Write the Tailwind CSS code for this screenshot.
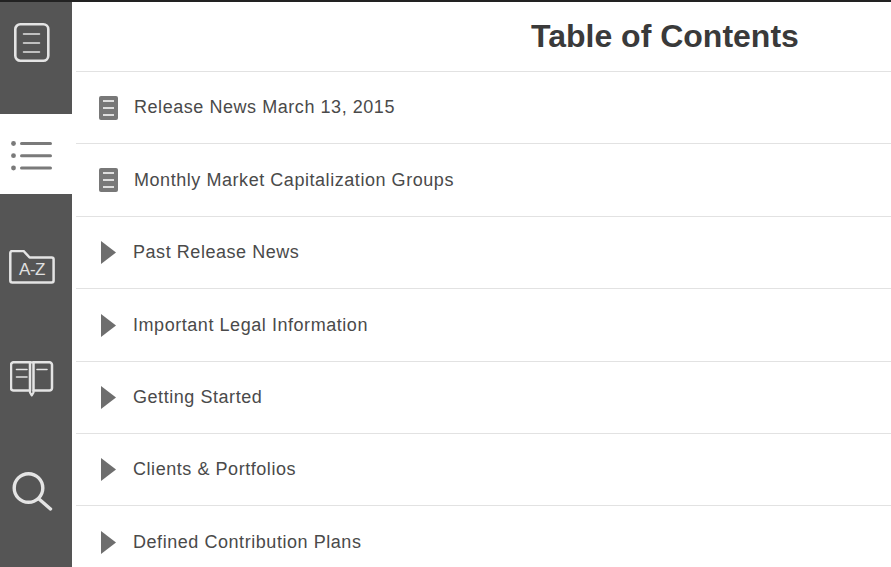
<!DOCTYPE html>
<html lang="en">
<head>
  <meta charset="UTF-8">
  <title>Table of Contents</title>
  <script src="https://cdn.jsdelivr.net/npm/@tailwindcss/browser@4"></script>
</head>
<body class="h-[567px] overflow-hidden bg-white font-['Liberation_Sans',Arial,sans-serif]">
  <div class="h-[2px] bg-[#222]"></div>
  <div class="flex h-[565px]">

    <!-- Sidebar -->
    <nav class="w-[72px] shrink-0 flex flex-col bg-[#555555]">
      <div class="h-[112px] pl-[14px] pt-[21px]">
        <svg width="36" height="40" viewBox="0 0 36 40" fill="none" stroke="#e4e4e4" stroke-linecap="round">
          <rect x="1.3" y="1.3" width="33" height="36.400" rx="5" stroke-width="2.600"/>
          <path d="M9.500 11h16M9.500 20h16M9.500 29h16" stroke-width="1.500"/>
        </svg>
      </div>
      <div class="h-[80px] bg-white pl-[10px] pt-[26px]">
        <svg width="43" height="34" viewBox="0 0 43 34" fill="#7a7a7a">
          <circle cx="3.500" cy="3.500" r="2.400"/><circle cx="3.500" cy="15.700" r="2.400"/><circle cx="3.500" cy="28" r="2.400"/>
          <rect x="10" y="2" width="32" height="3" rx="1.500"/><rect x="10" y="14.200" width="32" height="3" rx="1.500"/><rect x="10" y="26.500" width="32" height="3" rx="1.500"/>
        </svg>
      </div>
      <div class="h-[114px] pl-[9px] pt-[56px]">
        <div class="relative w-[46px] h-[34px]">
          <svg width="46" height="34" viewBox="0 0 46 34" fill="none" stroke="#e4e4e4" stroke-width="2.500" stroke-linejoin="round">
            <path d="M1.300 3a2 2 0 0 1 2-2h11.300l6 6.500h22a2 2 0 0 1 2 2V30.500a2 2 0 0 1-2 2H3.300a2 2 0 0 1-2-2z"/>
          </svg>
          <span class="absolute left-0 right-0 top-[10px] text-center text-[17px] leading-[20px] tracking-[-0.5px] text-[#e0e0e0]">A-Z</span>
        </div>
      </div>
      <div class="h-[110px] pl-[10px] pt-[53px]">
        <svg width="44" height="36" viewBox="0 0 44 36" fill="none" stroke="#e4e4e4" stroke-linecap="round" stroke-linejoin="round">
          <path d="M20 1.300H3.500a2.500 2.500 0 0 0-2.500 2.500V27a2.500 2.500 0 0 0 2.500 2.500H20zM23.500 1.300H39.500a2.500 2.500 0 0 1 2.500 2.500V27a2.500 2.500 0 0 1-2.500 2.500H23.500z" stroke-width="2.500"/>
          <path d="M20 1.300h3.500M20 29.500v2l1.750 2.800 1.750-2.800v-2" stroke-width="2.200"/>
          <path d="M6.500 8.500h10.500M6.500 16h10.500M27 8.500h10" stroke-width="1.600"/>
        </svg>
      </div>
      <div class="flex-1 pl-[12px] pt-[54px]">
        <svg width="41" height="39" viewBox="0 0 41 39" fill="none" stroke="#e4e4e4" stroke-width="3.400" stroke-linecap="round">
          <circle cx="16.500" cy="16" r="14.300"/>
          <path d="M27 27L38.500 37"/>
        </svg>
      </div>
    </nav>

    <!-- Contents -->
    <main class="flex-1 pl-[4px] text-[#4a4a4a]">
      <h1 class="h-[70px] border-b border-[#e2e2e2] pl-[455px] pt-[16px] text-[32px] leading-[36px] font-bold text-[#3a3a3a] whitespace-nowrap">Table of Contents</h1>

      <div class="h-[72px] border-b border-[#e2e2e2] flex items-center pl-[23px] gap-[16px] text-[18px] tracking-[0.55px]">
        <svg width="19" height="24" viewBox="0 0 19 24" class="shrink-0"><rect width="19" height="24" rx="2" fill="#787878"/><path d="M4 5h11M4 12h11M4 19h11" stroke="#fff" stroke-width="1.500"/></svg>
        <span>Release News March 13, 2015</span>
      </div>
      <div class="h-[73px] border-b border-[#e2e2e2] flex items-center pl-[23px] gap-[16px] text-[18px] tracking-[0.55px]">
        <svg width="19" height="24" viewBox="0 0 19 24" class="shrink-0"><rect width="19" height="24" rx="2" fill="#787878"/><path d="M4 5h11M4 12h11M4 19h11" stroke="#fff" stroke-width="1.500"/></svg>
        <span>Monthly Market Capitalization Groups</span>
      </div>
      <div class="h-[72px] border-b border-[#e2e2e2] flex items-center pl-[25px] gap-[17px] text-[18px] tracking-[0.55px]">
        <svg width="15" height="23" viewBox="0 0 15 23" class="shrink-0"><path d="M0 0l15 11.500L0 23z" fill="#6e6e6e"/></svg>
        <span>Past Release News</span>
      </div>
      <div class="h-[73px] border-b border-[#e2e2e2] flex items-center pl-[25px] gap-[17px] text-[18px] tracking-[0.55px]">
        <svg width="15" height="23" viewBox="0 0 15 23" class="shrink-0"><path d="M0 0l15 11.500L0 23z" fill="#6e6e6e"/></svg>
        <span>Important Legal Information</span>
      </div>
      <div class="h-[72px] border-b border-[#e2e2e2] flex items-center pl-[25px] gap-[17px] text-[18px] tracking-[0.55px]">
        <svg width="15" height="23" viewBox="0 0 15 23" class="shrink-0"><path d="M0 0l15 11.500L0 23z" fill="#6e6e6e"/></svg>
        <span>Getting Started</span>
      </div>
      <div class="h-[72px] border-b border-[#e2e2e2] flex items-center pl-[25px] gap-[17px] text-[18px] tracking-[0.55px]">
        <svg width="15" height="23" viewBox="0 0 15 23" class="shrink-0"><path d="M0 0l15 11.500L0 23z" fill="#6e6e6e"/></svg>
        <span>Clients &amp; Portfolios</span>
      </div>
      <div class="h-[72px] flex items-center pl-[25px] gap-[17px] text-[18px] tracking-[0.55px]">
        <svg width="15" height="23" viewBox="0 0 15 23" class="shrink-0"><path d="M0 0l15 11.500L0 23z" fill="#6e6e6e"/></svg>
        <span>Defined Contribution Plans</span>
      </div>
    </main>
  </div>
</body>
</html>
